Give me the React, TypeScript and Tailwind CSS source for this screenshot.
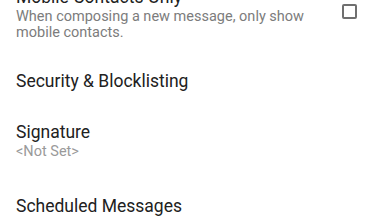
export default function App() {
  return (
    <div className="h-[216px] w-[384px] overflow-hidden bg-white font-['Roboto',sans-serif]">
      <div className="mt-[-14px] flex flex-col">
        <div className="flex items-start pb-[13px] pl-[16px] pr-[27px]">
          <div className="mr-[18px] flex-1">
            <p className="text-[17.5px] leading-[22px] text-[#212121]">Mobile Contacts Only</p>
            <p className="mt-[1px] text-[14.5px] leading-[16px] text-[#7c7c7c]">
              When composing a new message, only show mobile contacts.
            </p>
          </div>
          <div className="mt-[18px] h-[15px] w-[15px] rounded-[2px] border-2 border-[#6f6f6f]" />
        </div>
        <div className="py-[16px] pl-[16px]">
          <p className="text-[17.5px] leading-[22px] text-[#212121]">Security &amp; Blocklisting</p>
        </div>
        <div className="pb-[19px] pt-[13px] pl-[16px]">
          <p className="text-[17.5px] leading-[22px] text-[#212121]">Signature</p>
          <p className="mt-[1px] text-[14.5px] leading-[16px] text-[#9a9a9a]">&lt;Not Set&gt;</p>
        </div>
        <div className="py-[16px] pl-[16px]">
          <p className="text-[17.5px] leading-[22px] text-[#212121]">Scheduled Messages</p>
        </div>
      </div>
    </div>
  );
}
